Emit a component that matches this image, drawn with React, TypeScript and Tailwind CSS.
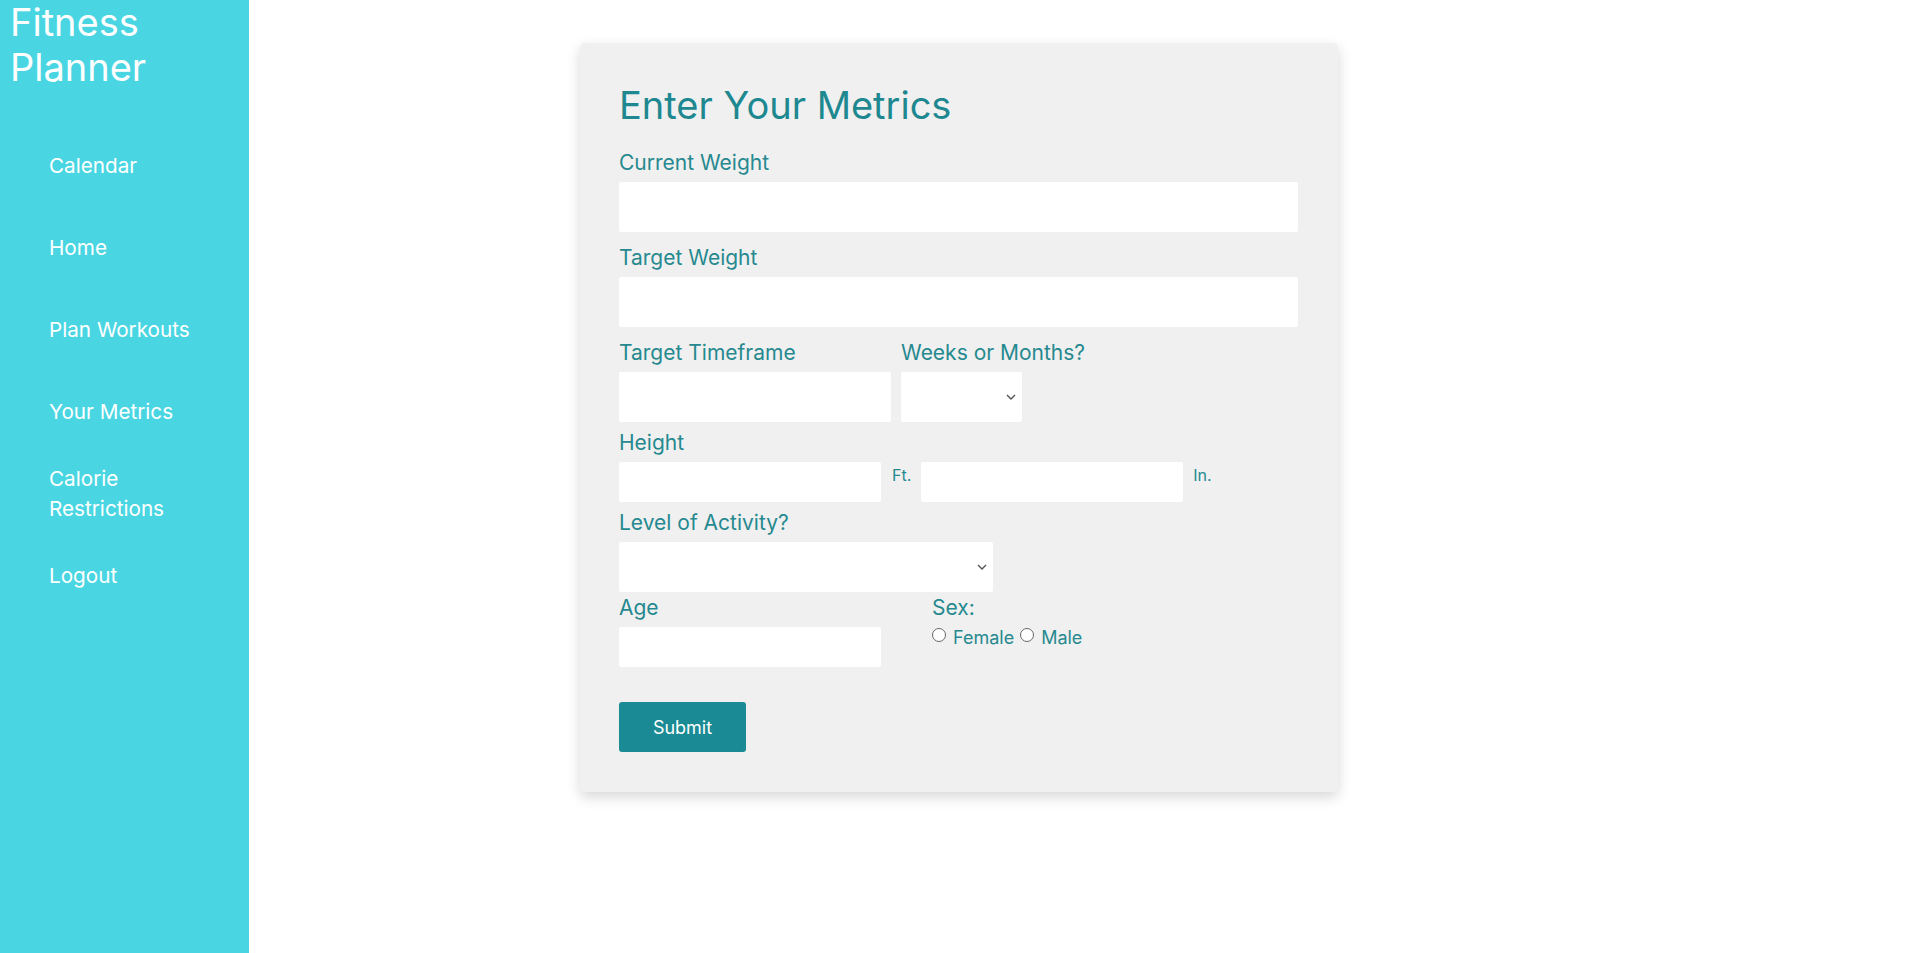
import React from 'react';

const navItems = ['Calendar', 'Home', 'Plan Workouts', 'Your Metrics', 'Calorie Restrictions', 'Logout'];

function Chevron() {
    return (
        <svg width="10" height="6" viewBox="0 0 10 6" className="absolute right-[6px] top-1/2 -translate-y-1/2">
            <path d="M1 1 L5 5 L9 1" fill="none" stroke="#555" strokeWidth="1.4" />
        </svg>
    );
}

function FakeSelect({ className }: { className: string }) {
    return (
        <div className={`relative bg-white rounded-[2px] ${className}`}>
            <select className="absolute inset-0 w-full h-full opacity-0" />
            <Chevron />
        </div>
    );
}

function Label({ text, className = '' }: { text: string; className?: string }) {
    return <label className={`block text-[21px] leading-[21px] pb-[9px] text-[#25898f] ${className}`}>{text}</label>;
}

function Radio({ label }: { label: string }) {
    return (
        <label className="flex items-start">
            <span className="w-[14px] h-[14px] mt-[-1px] rounded-full border border-[#666] bg-white" />
            <span className="ml-[7px] mr-[6px] text-[18px] leading-[18px] text-[#25898f]">{label}</span>
        </label>
    );
}

export default function App() {
    return (
        <div className="flex min-h-screen bg-white" style={{ fontFamily: 'Inter, "Noto Sans", sans-serif' }}>
            {/* Sidebar */}
            <aside className="w-[249px] shrink-0 min-h-screen bg-[#49d6e2] text-white">
                <div className="pl-[10px] text-[38px] leading-[45px]">
                    Fitness
                    <br />
                    Planner
                </div>
                <ul className="mt-[35px]">
                    {navItems.map((item) => (
                        <li key={item} className="h-[82px] flex items-center pl-[49px] pr-[40px] text-[20.7px] leading-[30px]">
                            {item}
                        </li>
                    ))}
                </ul>
            </aside>

            {/* Main */}
            <main className="flex-1">
                <div className="ml-[331px] mt-[43px] w-[758px] rounded-[5px] bg-[#f0f0f0] px-[39px] pt-[43px] pb-[40px] shadow-[0_5px_14px_rgba(0,0,0,0.16)]">
                    <h1 className="text-[38px] leading-[38px] text-[#1e8890]">Enter Your Metrics</h1>

                    <Label text="Current Weight" className="mt-[28px]" />
                    <input className="block w-[679px] h-[50px] bg-white rounded-[2px] outline-none" />

                    <Label text="Target Weight" className="mt-[15px]" />
                    <input className="block w-[679px] h-[50px] bg-white rounded-[2px] outline-none" />

                    <div className="flex gap-[10px] mt-[15px]">
                        <div>
                            <Label text="Target Timeframe" />
                            <input className="block w-[272px] h-[50px] bg-white rounded-[2px] outline-none" />
                        </div>
                        <div>
                            <Label text="Weeks or Months?" />
                            <FakeSelect className="w-[121px] h-[50px]" />
                        </div>
                    </div>

                    <Label text="Height" className="mt-[10px]" />
                    <div className="flex items-start">
                        <input className="block w-[262px] h-[40px] bg-white rounded-[2px] outline-none" />
                        <span className="ml-[11px] mr-[10px] mt-[5px] text-[16px] leading-[16px] text-[#25898f]">Ft.</span>
                        <input className="block w-[262px] h-[40px] bg-white rounded-[2px] outline-none" />
                        <span className="ml-[10px] mt-[5px] text-[16px] leading-[16px] text-[#25898f]">In.</span>
                    </div>

                    <Label text="Level of Activity?" className="mt-[10px]" />
                    <FakeSelect className="w-[374px] h-[50px]" />

                    <div className="flex mt-[5px]">
                        <div className="w-[313px]">
                            <Label text="Age" />
                            <input className="block w-[262px] h-[40px] bg-white rounded-[2px] outline-none" />
                        </div>
                        <div>
                            <Label text="Sex:" />
                            <div className="flex mt-[2px]">
                                <Radio label="Female" />
                                <Radio label="Male" />
                            </div>
                        </div>
                    </div>

                    <button className="mt-[35px] w-[127px] h-[50px] rounded-[3px] bg-[#1a8a94] text-white text-[18px]">
                        Submit
                    </button>
                </div>
            </main>
        </div>
    );
}
